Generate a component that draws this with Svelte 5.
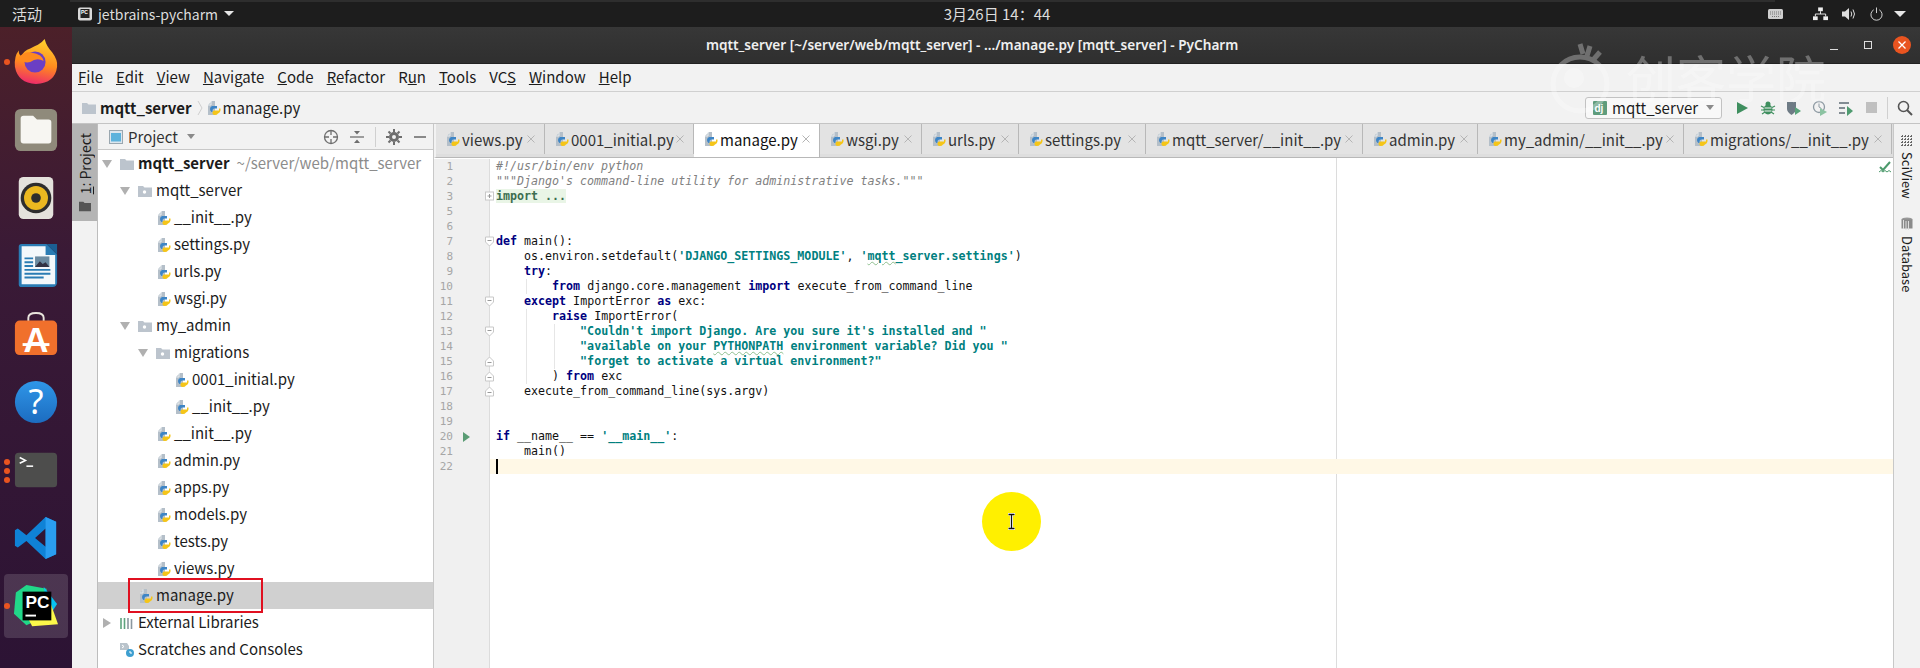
<script>
  const menu = [['F','ile'],['E','dit'],['V','iew'],['N','avigate'],['C','ode'],['R','efactor'],['R','un',1],['T','ools'],['VC','S',2],['W','indow'],['H','elp']];
  const tabs = [['views.py',109],['0001_initial.py',149],['manage.py',126],['wsgi.py',102],['urls.py',97],['settings.py',127],['mqtt_server/__init__.py',217],['admin.py',115],['my_admin/__init__.py',206],['migrations/__init__.py',208]];
  const tree = [
    {d:0,t:'mqtt_server',k:'root',o:1,bold:1,hint:'~/server/web/mqtt_server'},
    {d:1,t:'mqtt_server',k:'pkg',o:1},{d:2,t:'__init__.py',k:'py'},{d:2,t:'settings.py',k:'py'},{d:2,t:'urls.py',k:'py'},{d:2,t:'wsgi.py',k:'py'},
    {d:1,t:'my_admin',k:'pkg',o:1},{d:2,t:'migrations',k:'pkg',o:1},{d:3,t:'0001_initial.py',k:'py'},{d:3,t:'__init__.py',k:'py'},
    {d:2,t:'__init__.py',k:'py'},{d:2,t:'admin.py',k:'py'},{d:2,t:'apps.py',k:'py'},{d:2,t:'models.py',k:'py'},{d:2,t:'tests.py',k:'py'},{d:2,t:'views.py',k:'py'},
    {d:1,t:'manage.py',k:'py',sel:1},{d:0,t:'External Libraries',k:'lib',c:1},{d:0,t:'Scratches and Consoles',k:'scr'}
  ];
  const code = [
    {n:1,s:[['c','#!/usr/bin/env python']]},
    {n:2,s:[['c',`"""Django's command-line utility for administrative tasks."""`]]},
    {n:3,f:'plus',s:[['i','import ...']]},
    {n:5,s:[]},{n:6,s:[]},
    {n:7,f:'open',s:[['k','def'],['',' main():']]},
    {n:8,s:[['','    os.environ.setdefault('],['s',"'DJANGO_SETTINGS_MODULE'"],['',', '],['s',"'"],['w','mqtt'],['s','_server.settings'],['s',"'"],['',')']]},
    {n:9,s:[['','    '],['k','try'],['',':']]},
    {n:10,g:[4],s:[['','        '],['k','from'],['',' django.core.management '],['k','import'],['',' execute_from_command_line']]},
    {n:11,f:'open',s:[['','    '],['k','except'],['',' ImportError '],['k','as'],['',' exc:']]},
    {n:12,g:[4],s:[['','        '],['k','raise'],['',' ImportError(']]},
    {n:13,g:[4,8],f:'open',s:[['','            '],['s',`"Couldn't import Django. Are you sure it's installed and "`]]},
    {n:14,g:[4,8],s:[['','            '],['s','"available on your '],['w','PYTHONPATH'],['s',' environment variable? Did you "']]},
    {n:15,g:[4,8],f:'close',s:[['','            '],['s','"forget to activate a virtual environment?"']]},
    {n:16,g:[4],f:'close',s:[['','        ) '],['k','from'],['',' exc']]},
    {n:17,f:'close',s:[['','    execute_from_command_line(sys.argv)']]},
    {n:18,s:[]},{n:19,s:[]},
    {n:20,run:1,s:[['k','if'],['',' __name__ == '],['s',"'__main__'"],['',':']]},
    {n:21,s:[['','    main()']]},
    {n:22,cur:1,s:[]}
  ];
</script>

{#snippet py()}
  <svg class="ic16" viewBox="0 0 16 16"><path d="M2 5l4-4h3v14H2z" fill="#b4bfc9"/><path d="M5 1.500v3.500H2" fill="none" stroke="#e8ecef" stroke-width="1"/><path d="M6 6h5v2.500H8.500q-2 0-2 2V12H5.500Q4 11 4 9t2-3z" fill="#3d85c6"/><path d="M14.500 8.500Q15 12 12 13.500q-1 1.500-3 1.500t-2.500-1.500V12.500q0-2 2-2H13V8.500z" fill="#f5c518"/></svg>
{/snippet}
{#snippet folder(pkg)}
  <svg class="ic14" viewBox="0 0 14 14"><path d="M0 2h5l1.500 1.500H14V13H0z" fill="#bcc4cd"/>{#if pkg}<circle cx="6.500" cy="8" r="1.700" fill="#fff"/>{/if}</svg>
{/snippet}

<div class="screen">
  <header class="topbar">
    <div class="streak"></div>
    <span class="activities">活动</span>
    <svg class="appicon" viewBox="0 0 16 16"><rect x="1" y="1.500" width="14" height="13" rx="2" fill="#d9d9d9"/><rect x="3.500" y="3" width="9" height="9" fill="#222"/><text x="4" y="8" class="tiny">PC</text></svg>
    <span class="appname">jetbrains-pycharm</span>
    <span class="tri"></span>
    <span class="clock">3月26日 14：44</span>
    <div class="tray">
      <svg class="keyboard" viewBox="0 0 15 10"><rect width="15" height="10" rx="1.500" fill="#cfcfcf"/><path d="M2 3h11M2 5h11M4 7.500h7" stroke="#777" stroke-dasharray="1 1"/></svg>
      <svg class="network" viewBox="0 0 16 14"><rect x="5.500" y="0" width="5" height="4" fill="#eee"/><rect x="0" y="9.500" width="5" height="4" fill="#eee"/><rect x="11" y="9.500" width="5" height="4" fill="#eee"/><path d="M8 4v3M2.500 9.500V7h11v2.500" fill="none" stroke="#eee"/></svg>
      <svg class="sound" viewBox="0 0 15 14"><path d="M0 4.500h3L7 1v12L3 9.500H0z" fill="#ddd"/><path d="M9 4.500q1.500 2.500 0 5M11 2.500q3 4.500 0 9" fill="none" stroke="#ddd"/></svg>
      <svg class="power" viewBox="0 0 14 14"><path d="M4 2.500a6 6 0 1 0 6 0M7 0v6" fill="none" stroke="#ddd"/></svg>
      <span class="tri wide"></span>
    </div>
  </header>

  <div class="desk">
    <nav class="dock">
      <div class="slot"><i class="dot"></i>
        <svg viewBox="0 0 48 48"><defs><linearGradient id="ff" x1="0.600" y1="0" x2="0.400" y2="1"><stop offset="0" stop-color="#ffd12e"/><stop offset=".55" stop-color="#ff8a1e"/><stop offset="1" stop-color="#ee2a6b"/></linearGradient></defs><path d="M33 0q2 8 8 14 6 8 5 15-2 17-22 18Q5 46 2 29 1 18 6 12q0 5 3 6 2-6 9-8 5-3 8-4 4-2 7-6z" fill="url(#ff)"/><circle cx="23" cy="24" r="11" fill="#6b3fc4"/><path d="M6 19q6-6 13-5 12 2 13 9-7-4-14 1-7 2-12-5z" fill="#ff8a1e"/></svg>
      </div>
      <div class="slot">
        <svg viewBox="0 0 48 48"><rect x="2" y="2" width="44" height="44" rx="6" fill="#8f8a7b"/><path d="M8 12q0-3 3-3h10l4 4h12q3 0 3 3v19q0 3-3 3H11q-3 0-3-3z" fill="#f7f6f2"/></svg>
      </div>
      <div class="slot">
        <svg viewBox="0 0 48 48"><rect x="6" y="2" width="36" height="44" rx="5" fill="#e4e2dc"/><circle cx="24" cy="24" r="16" fill="#2d2d2d"/><circle cx="24" cy="24" r="12.500" fill="#eab820"/><circle cx="24" cy="24" r="5" fill="#2d2d2d"/></svg>
      </div>
      <div class="slot">
        <svg viewBox="0 0 48 48"><path d="M9 1h26l11 11v29q0 5-5 5H9q-3 0-3-3V4q0-3 3-3z" fill="#2a7cb4"/><path d="M9 3.500h25v9h10V43H9z" fill="#f3f8fb"/><path d="M35 1l11 0v11z" fill="#1b5f93"/><path d="M12 16h9M12 20h9M12 24h9M12 28h27M12 32h27M12 36h20" stroke="#2a7cb4" stroke-width="2"/><rect x="23" y="14" width="15" height="11" fill="#6a8aa0"/><path d="M23 25l5-6 3 3 3-2 4 5z" fill="#334"/></svg>
      </div>
      <div class="slot">
        <svg viewBox="0 0 48 48"><path d="M16 12V7q0-5 8-5t8 5v5" fill="none" stroke="#e8e4dc" stroke-width="2"/><rect x="2" y="10" width="44" height="36" rx="5" fill="#f0702c"/><text x="24" y="43" class="store">A</text><path d="M10 35h28" stroke="#fff" stroke-width="3"/></svg>
      </div>
      <div class="slot">
        <svg viewBox="0 0 48 48"><defs><linearGradient id="hp" x1="0" y1="0" x2="0" y2="1"><stop offset="0" stop-color="#2f96e8"/><stop offset="1" stop-color="#1c6cc0"/></linearGradient></defs><circle cx="24" cy="24" r="22" fill="url(#hp)"/><text x="24" y="37" class="help">?</text></svg>
      </div>
      <div class="slot"><i class="dots"><i></i><i></i><i></i></i>
        <svg viewBox="0 0 48 48"><rect x="2" y="6" width="44" height="36" rx="4" fill="#4d4d4c"/><path d="M7 11l6 3-6 3" fill="none" stroke="#fff" stroke-width="1.600"/><path d="M14 20h7" stroke="#fff" stroke-width="1.600"/></svg>
      </div>
      <div class="slot">
        <svg viewBox="0 0 48 48"><path d="M34 2l11 5v34l-11 5-20-19-9 7-3-2v-16l3-2 9 7zM34 14l-11 10 11 9z" fill="#0f82d6" fill-rule="evenodd"/><path d="M34 2l11 5v34l-11 5z" fill="#2a9df0"/></svg>
      </div>
      <div class="slot active"><i class="dot"></i>
        <svg viewBox="0 0 48 48"><path d="M14 2L35 6 36 34 14 44 1 32 3 10z" fill="#21d789"/><path d="M32 4l14 18-9 14z" fill="#07c3f2"/><path d="M10 26l26-14 11 31-27 2z" fill="#fcf84a"/><rect x="10" y="9" width="30" height="30" fill="#000"/><text x="13" y="26" class="pc">PC</text><rect x="13" y="33" width="11" height="2" fill="#fff"/></svg>
      </div>
      <div class="slot">
        <svg viewBox="0 0 48 48"><path d="M4 46q3-24 15-24 7 0 10 24" fill="none" stroke="#3a6df0" stroke-width="4"/><path d="M26 30q5-8 9-8 7 0 10 20" fill="none" stroke="#f0a010" stroke-width="4"/></svg>
      </div>
    </nav>

    <main class="ide">
      <div class="title">mqtt_server [~/server/web/mqtt_server] - .../manage.py [mqtt_server] - PyCharm
        <div class="winbtns">
          <span class="wmin"></span><span class="wmax"></span>
          <svg class="wclose" viewBox="0 0 18 18"><circle cx="9" cy="9" r="9" fill="#e95420"/><path d="M5.500 5.500l7 7M12.500 5.500l-7 7" stroke="#fff" stroke-width="1.300"/></svg>
        </div>
      </div>

      <div class="menubar">
        {#each menu as m}
          <span>{#if m[2] === 1}R<u>u</u>n{:else if m[2] === 2}VC<u>S</u>{:else}<u>{m[0]}</u>{m[1]}{/if}</span>
        {/each}
      </div>

      <div class="navbar">
        {@render folder(false)}
        <b>mqtt_server</b>
        <svg class="crumb" viewBox="0 0 6 16"><path d="M1 1l4 7-4 7" fill="none" stroke="#cfcfcf"/></svg>
        {@render py()}
        <span class="navfile">manage.py</span>
        <div class="runbar">
          <div class="runcfg">
            <svg class="dj" viewBox="0 0 14 14"><rect width="14" height="14" rx="1" fill="#5e9c7c"/><text x="1.500" y="10.500" class="djt">dj</text></svg>
            <span>mqtt_server</span><i class="smalltri"></i>
          </div>
          <svg class="tool" viewBox="0 0 16 16"><path d="M3 2l11 6-11 6z" fill="#3f8f5f"/></svg>
          <svg class="tool" viewBox="0 0 16 16"><ellipse cx="8" cy="9.500" rx="4.500" ry="5" fill="#3f8f5f"/><circle cx="8" cy="4" r="2.500" fill="#3f8f5f"/><path d="M1 6l3 1.500M15 6l-3 1.500M1 10h3M15 10h-3M2 14l3-2M14 14l-3-2" stroke="#3f8f5f" stroke-width="1.200"/><path d="M4.500 8h7M4.500 11h7" stroke="#f2f2f2"/></svg>
          <svg class="tool" viewBox="0 0 16 16"><path d="M1 2h9v7q0 3-4.500 6Q1 12 1 9z" fill="#6e7b85"/><path d="M9 7l6 4-6 4z" fill="#59a37a"/></svg>
          <svg class="tool" viewBox="0 0 16 16"><circle cx="7" cy="7" r="5.500" fill="none" stroke="#8e9aa3" stroke-width="1.300"/><path d="M7 3.500V7l2.500 1.500" fill="none" stroke="#8e9aa3"/><path d="M8 8l7 4-7 4z" fill="#8cc3a2"/></svg>
          <svg class="tool" viewBox="0 0 16 16"><path d="M1 3h10M1 8h6M1 13h6" stroke="#5e6b74" stroke-width="1.500"/><path d="M9 6l6 5-6 5z" fill="#4f9b70"/></svg>
          <span class="stop"></span>
          <span class="vsep"></span>
          <svg class="tool search" viewBox="0 0 16 16"><circle cx="6.500" cy="6.500" r="5" fill="none" stroke="#555" stroke-width="1.600"/><path d="M10 10l5 5" stroke="#555" stroke-width="2"/></svg>
        </div>
      </div>

      <div class="work">
        <aside class="strip">
          <div class="striptab">
            <span class="vtext"><u>1</u>: Project</span>
            <svg class="ic12" viewBox="0 0 14 14"><path d="M0 2h5l1.500 1.500H14V13H0z" fill="#555"/></svg>
          </div>
        </aside>

        <section class="panel">
          <div class="panelhead">
            <svg class="ic14" viewBox="0 0 14 14"><rect x=".5" y=".5" width="13" height="13" fill="#dce6ee" stroke="#9aa7b0"/><rect x="2" y="3" width="10" height="8.500" fill="#5cb2dc"/></svg>
            <span>Project</span>
            <i class="smalltri"></i>
            <div class="panelicons">
              <svg viewBox="0 0 16 16"><circle cx="8" cy="8" r="6.500" fill="none" stroke="#6e6e6e" stroke-width="1.300"/><path d="M8 1v5M8 10v5M1 8h5M10 8h5" stroke="#6e6e6e" stroke-width="1.300"/></svg>
              <svg viewBox="0 0 16 16"><path d="M1 8h14" stroke="#6e6e6e" stroke-width="1.300"/><path d="M5 2h6L8 5.500zM5 14h6L8 10.500z" fill="#6e6e6e"/></svg>
              <span class="vsep short"></span>
              <svg viewBox="0 0 16 16"><circle cx="8" cy="8" r="3.500" fill="none" stroke="#6e6e6e" stroke-width="3"/><path d="M8 0v3M8 13v3M0 8h3M13 8h3M2.500 2.500l2 2M11.500 11.500l2 2M13.500 2.500l-2 2M4.500 11.500l-2 2" stroke="#6e6e6e" stroke-width="2"/></svg>
              <svg viewBox="0 0 16 16"><path d="M2 8h12" stroke="#6e6e6e" stroke-width="1.600"/></svg>
            </div>
          </div>
          <div class="tree">
            {#each tree as r}
              <div class="row" class:sel={r.sel} style="padding-left:{2 + r.d * 18}px">
                <span class="arrow">{#if r.o}<i class="down"></i>{:else if r.c}<i class="right"></i>{/if}</span>
                {#if r.k === 'py'}
                  {@render py()}
                {:else if r.k === 'root'}
                  {@render folder(false)}
                {:else if r.k === 'pkg'}
                  {@render folder(true)}
                {:else if r.k === 'lib'}
                  <svg class="ic14" viewBox="0 0 14 14"><path d="M1 2v11M4.500 2v11" stroke="#5ea37e" stroke-width="1.600"/><path d="M8 2v11M11.500 3v10" stroke="#8b979f" stroke-width="1.600"/></svg>
                {:else}
                  <svg class="ic14" viewBox="0 0 14 14"><path d="M0 0h7l2 3v4H0z" fill="#b9c3cb"/><path d="M2 2l2 1.500L2 5" fill="none" stroke="#fff"/><circle cx="10" cy="10" r="4" fill="#3e9fd0"/><path d="M10 8v2h2" fill="none" stroke="#fff"/></svg>
                {/if}
                <span class:strong={r.bold} class="name">{r.t}</span>
                {#if r.hint}<span class="hint">{r.hint}</span>{/if}
              </div>
            {/each}
          </div>
          <div class="redbox"></div>
        </section>

        <section class="editor">
          <div class="tabs">
            {#each tabs as t}
              <div class="tab" class:on={t[0] === 'manage.py'} style="width:{t[1]}px">
                {@render py()}
                <span class="tabname">{t[0]}</span>
                <svg class="x" viewBox="0 0 8 8"><path d="M.5.500l7 7M7.500.500l-7 7" stroke="#b5b5b5"/></svg>
              </div>
            {/each}
          </div>
          <div class="codearea">
            <div class="margin"></div>
            {#each code as l}
              <div class="line" class:cur={l.cur}>
                <div class="gut">
                  <span class="num">{l.n}</span>
                  {#if l.run}<i class="gutrun"></i>{/if}
                  {#if l.f}
                    <svg class="fold" viewBox="0 0 9 11">
                      {#if l.f === 'plus'}<rect x=".5" y="1" width="8" height="8" fill="#fff" stroke="#c8c8c8"/><path d="M2.500 5h4M4.500 3v4" stroke="#999"/>
                      {:else if l.f === 'open'}<path d="M.5 1h8v5l-4 4-4-4z" fill="#fff" stroke="#c8c8c8"/><path d="M2.500 4.500h4" stroke="#999"/>
                      {:else}<path d="M.5 10h8V5l-4-4-4 4z" fill="#fff" stroke="#c8c8c8"/><path d="M2.500 6.500h4" stroke="#999"/>{/if}
                    </svg>
                  {/if}
                </div>
                <div class="txt">{#if l.g}{#each l.g as g}<i class="guide" style="left:{g * 7}px"></i>{/each}{/if}{#if l.cur}<i class="caret"></i>{/if}<code>{#each l.s as seg}<span class={seg[0]}>{seg[1]}</span>{/each}</code></div>
              </div>
            {/each}
            <svg class="okmark" viewBox="0 0 12 12"><path d="M1 6l3 3 7-8" fill="none" stroke="#4c9a6c" stroke-width="2"/><path d="M0 11l2-1.500 2 1.500 2-1.500 2 1.500 2-1.500 2 1.500" fill="none" stroke="#4c9a6c"/></svg>
            <div class="pointer"><svg viewBox="0 0 9 17"><path d="M1 1h7M1 16h7M4.500 1v15" fill="none" stroke="#fff" stroke-width="3"/><path d="M1.500 1.500h6M1.500 15.500h6M4.500 1.500v14" fill="none" stroke="#111" stroke-width="1.300"/></svg></div>
          </div>
        </section>

        <aside class="rstrip">
          <svg class="ic12" viewBox="0 0 12 12"><path d="M0 1.500h12M0 4.500h12M0 7.500h12M0 10.500h12M1.500 0v12M4.500 0v12M7.500 0v12M10.500 0v12" stroke="#666" stroke-dasharray="2 1"/></svg>
          <span class="vright">SciView</span>
          <svg class="ic12 db" viewBox="0 0 12 14"><ellipse cx="6" cy="2.500" rx="5.500" ry="2" fill="#999"/><rect x=".5" y="2.500" width="11" height="9" fill="#8a8a8a"/><path d="M2.500 3v9M5 4v9M7.500 4v9" stroke="#ddd"/></svg>
          <span class="vright">Database</span>
        </aside>
      </div>
    </main>
  </div>

  <div class="mark">
    <svg viewBox="0 0 70 80"><circle cx="36" cy="48" r="27" fill="none" stroke="#fff" stroke-width="5"/><circle cx="30" cy="42" r="10" fill="#fff"/><path d="M36 8l3 10M46 10l-3 10M56 16l-7 8" stroke="#fff" stroke-width="5"/></svg>
    <span>创客学院</span>
  </div>
</div>

<style>
  :global(body) { margin: 0; background: #1d1d1d; }
  .screen { position: relative; width: 1920px; height: 668px; overflow: hidden; display: flex; flex-direction: column; font-family: "Noto Sans CJK SC", "Noto Sans", sans-serif; color: #1c1c1c; }

  .topbar { position: relative; flex: 0 0 27px; background: #1d1d1d; display: flex; align-items: center; color: #dcdcdc; font-size: 15px; line-height: 20px; }
  .streak { position: absolute; left: 70px; top: 0; width: 1705px; height: 2px; background: #2e2e2e; }
  .activities { margin-left: 12px; }
  .appicon { width: 16px; height: 16px; margin-left: 35px; }
  .tiny { font: 700 5px "Liberation Sans", sans-serif; fill: #fff; }
  .appname { margin-left: 5px; width: 126px; white-space: nowrap; font-size: 14px; }
  .tri { display: block; width: 0; height: 0; border: 5px solid transparent; border-top: 5px solid #e6e6e6; border-bottom: 0; }
  .tri.wide { border-width: 6px 6px 0; margin-left: 11px; }
  .clock { position: absolute; left: 935px; width: 124px; text-align: center; white-space: nowrap; }
  .tray { margin-left: auto; padding-right: 14px; display: flex; align-items: center; }
  .keyboard { width: 15px; height: 10px; margin-right: 30px; }
  .network { width: 15px; height: 14px; margin-right: 14px; }
  .sound { width: 15px; height: 14px; margin-right: 13px; }
  .power { width: 13px; height: 14px; }

  .desk { flex: 1; display: flex; min-height: 0; }
  .dock { flex: 0 0 72px; background: linear-gradient(180deg, #4c2029 0%, #3a1a36 35%, #2c1334 100%); padding-top: 1px; display: flex; flex-direction: column; overflow: hidden; }
  .slot { position: relative; flex: 0 0 68px; display: flex; align-items: center; justify-content: center; }
  .slot svg { position: relative; width: 46px; height: 46px; overflow: visible; }
  .slot.active::before { content: ""; position: absolute; left: 4px; top: 2px; width: 64px; height: 64px; background: rgba(255,255,255,.14); border-radius: 4px; }
  .dot { position: absolute; left: 4px; top: 31px; width: 6px; height: 6px; border-radius: 50%; background: #e95420; z-index: 1; }
  .dots { position: absolute; left: 4px; top: 23px; display: flex; flex-direction: column; gap: 3px; }
  .dots i { width: 6px; height: 6px; border-radius: 50%; background: #e95420; }
  .store { font: 700 36px "Liberation Sans", sans-serif; fill: #fff; text-anchor: middle; }
  .help { font: 400 36px "Noto Sans", sans-serif; fill: #fff; text-anchor: middle; }
  .pc { font: 700 18px "Liberation Sans", sans-serif; fill: #fff; }

  .ide { flex: 1; display: flex; flex-direction: column; min-width: 0; background: #f2f2f2; }
  .title { position: relative; flex: 0 0 36px; background: linear-gradient(#373737, #2f2f2f); border-bottom: 1px solid #222; box-sizing: border-box; color: #efefef; font-family: "Noto Sans", sans-serif; font-size: 13.600px; font-weight: 600; line-height: 36px; padding-left: 634px; white-space: nowrap; }
  .winbtns { position: absolute; right: 9px; top: 9px; display: flex; align-items: center; }
  .wmin { width: 8px; height: 1.500px; background: #ddd; margin-right: 26px; margin-top: 9px; }
  .wmax { width: 6px; height: 6px; border: 1.500px solid #ddd; margin-right: 21px; }
  .wclose { width: 18px; height: 18px; }

  .menubar { flex: 0 0 28px; box-sizing: border-box; border-bottom: 1px solid #d0d0d0; display: flex; align-items: center; gap: 13px; padding-left: 6px; padding-bottom: 1px; font-size: 15px; line-height: 22px; white-space: nowrap; }
  .navbar { flex: 0 0 32px; box-sizing: border-box; border-bottom: 1px solid #c4c4c4; display: flex; align-items: center; padding-left: 10px; font-size: 15px; line-height: 22px; }
  .navbar b { margin-left: 4px; font-weight: 700; }
  .crumb { width: 6px; height: 16px; margin: 0 3px 0 5px; }
  .navfile { margin-left: 1px; }
  .runbar { margin-left: auto; display: flex; align-items: center; padding-right: 7px; }
  .runcfg { width: 137px; height: 22px; box-sizing: border-box; border: 1px solid #c2c2c2; border-radius: 3px; background: #f8f8f8; display: flex; align-items: center; padding-left: 7px; gap: 5px; margin-right: 12px; }
  .dj { width: 14px; height: 14px; flex: none; }
  .djt { font: 700 10px "Liberation Sans", sans-serif; fill: #fff; }
  .smalltri { display: block; width: 0; height: 0; border: 4px solid transparent; border-top: 5px solid #8a8a8a; border-bottom: 0; margin-left: auto; margin-right: 7px; }
  .tool { width: 16px; height: 16px; margin-right: 10px; }
  .tool.search { margin: 0 0 0 9px; }
  .stop { width: 11px; height: 11px; background: #c0c0c0; margin: 0 10px 0 2px; }
  .vsep { width: 1px; height: 22px; background: #d0d0d0; display: block; }
  .vsep.short { height: 20px; }

  .work { flex: 1; display: flex; min-height: 0; background: #fff; }
  .strip { flex: 0 0 26px; background: #f2f2f2; border-right: 1px solid #bdbdbd; box-sizing: border-box; }
  .striptab { height: 97px; background: #b4b4b4; display: flex; flex-direction: column; align-items: center; padding-top: 9px; box-sizing: border-box; font-size: 14px; line-height: 18px; }
  .vtext { writing-mode: vertical-rl; transform: rotate(180deg); white-space: nowrap; }
  .ic12 { width: 12px; height: 12px; flex: none; }
  .striptab .ic12 { margin-top: 6px; }

  .panel { position: relative; flex: 0 0 336px; box-sizing: border-box; border-right: 1px solid #c8c8c8; background: #fff; overflow: hidden; }
  .panelhead { height: 26px; box-sizing: border-box; background: #f2f2f2; border-bottom: 1px solid #c8c8c8; display: flex; align-items: center; padding-left: 11px; color: #333; font-size: 15px; line-height: 22px; }
  .panelhead > span { margin-left: 5px; }
  .panelhead .smalltri { margin: 0 0 0 9px; }
  .panelicons { margin-left: auto; display: flex; align-items: center; gap: 10px; padding-right: 5px; }
  .panelicons svg { width: 16px; height: 16px; }
  .ic14 { width: 14px; height: 14px; flex: none; }
  .ic16 { width: 16px; height: 16px; flex: none; }
  .row { height: 27px; box-sizing: border-box; display: flex; align-items: center; font-size: 15px; line-height: 22px; white-space: nowrap; }
  .row.sel { background: #d0d0d0; }
  .name, .hint { position: relative; top: -1px; }
  .arrow { flex: 0 0 14px; margin-right: 6px; display: flex; justify-content: center; }
  .row:has(.ic16) .name { margin-left: 2px; }
  .name { margin-left: 4px; }
  .strong { font-weight: 700; }
  .hint { margin-left: 7px; color: #8c8c8c; }
  .down { border: 5px solid transparent; border-top: 8px solid #b0b0b0; border-bottom: 0; }
  .right { border: 5px solid transparent; border-left: 8px solid #b0b0b0; border-right: 0; }
  .redbox { position: absolute; left: 30px; top: 454px; width: 135px; height: 35px; box-sizing: border-box; border: 2px solid #e01020; }

  .editor { flex: 1; display: flex; flex-direction: column; min-width: 0; }
  .tabs { flex: 0 0 34px; box-sizing: border-box; display: flex; background: #dedede; border-bottom: 1px solid #b8b8b8; border-left: 2px solid #f2f2f2; overflow: hidden; padding-bottom: 3px; }
  .tab { position: relative; flex: none; display: flex; align-items: center; padding: 0 9px 0 9px; gap: 1px; box-sizing: border-box; border-right: 1px solid #b8b8b8; font-size: 15px; line-height: 22px; color: #333; white-space: nowrap; background: #e3e3e3; }
  .tab.on { background: #fff; color: #111; height: 33px; padding-bottom: 3px; }
  .tabname { position: relative; top: 1px; }
  .x { width: 8px; height: 8px; margin-left: auto; }
  .codearea { position: relative; flex: 1; padding-top: 1px; background: #fff; font-family: "DejaVu Sans Mono", monospace; font-size: 11.650px; }
  .margin { position: absolute; left: 902px; top: 0; bottom: 0; width: 1px; background: #dcdcdc; }
  .line { position: relative; height: 15px; display: flex; line-height: 15px; }
  .gut { position: relative; flex: 0 0 56px; box-sizing: border-box; background: #f0f0f0; border-right: 1px solid #dcdcdc; }
  .line:last-of-type .gut { background: none; }
  .codearea::before { content: ""; position: absolute; left: 0; top: 316px; bottom: 0; width: 55px; background: #f0f0f0; border-right: 1px solid #dcdcdc; }
  .num { position: absolute; right: 36px; color: #a6a6a6; font-size: 11px; }
  .gutrun { position: absolute; left: 29px; top: 2.500px; border: 5px solid transparent; border-left: 7px solid #5a9c74; border-right: 0; }
  .fold { position: absolute; right: -5px; top: 2px; width: 9px; height: 11px; z-index: 1; }
  .txt { position: relative; flex: 1; padding-left: 6px; white-space: pre; color: #111; }
  code { font: inherit; }
  .cur { background: #fff8e6; }
  .guide { position: absolute; top: 0; bottom: 0; margin-left: 8px; width: 1px; background: #e6e6e6; }
  .caret { position: absolute; left: 6px; top: 0; width: 2px; height: 15px; background: #000; }
  .c { color: #808080; font-style: italic; }
  .k { color: #000080; font-weight: 700; }
  .s { color: #008080; font-weight: 700; }
  .w { color: #008080; font-weight: 700; text-decoration: underline wavy #8fbf8f 1px; }
  .i { background: #e9f5e6; color: #3c6e50; font-weight: 700; }
  .okmark { position: absolute; right: 2px; top: 3px; width: 12px; height: 12px; }
  .pointer { position: absolute; left: 548px; top: 334px; width: 59px; height: 59px; border-radius: 50%; background: #fff000; display: flex; align-items: center; justify-content: center; }
  .pointer svg { width: 9px; height: 17px; }

  .rstrip { flex: 0 0 27px; background: #f2f2f2; border-left: 1px solid #c8c8c8; box-sizing: border-box; display: flex; flex-direction: column; align-items: center; padding-top: 11px; font-size: 13px; line-height: 18px; }
  .vright { writing-mode: vertical-rl; white-space: nowrap; margin-top: 5px; }
  .db { height: 14px; margin-top: 18px; }

  .mark { position: absolute; left: 1544px; top: 36px; display: flex; align-items: center; gap: 12px; color: #fff; opacity: .3; pointer-events: none; font-size: 50px; line-height: 80px; }
  .mark svg { width: 70px; height: 80px; }
</style>
